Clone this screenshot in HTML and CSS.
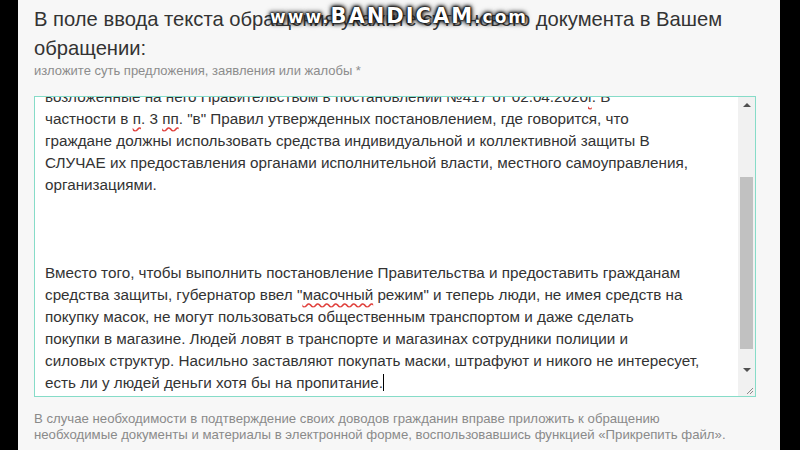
FILE: index.html
```html
<!DOCTYPE html>
<html lang="ru">
<head>
<meta charset="utf-8">
<title>Обращение</title>
<link rel="stylesheet" href="styles.css">
</head>
<body>
<div class="screen">
  <div class="bar"></div>
  <main class="page">
    <h1 class="title">В поле ввода текста обращения укажите суть нового документа в Вашем<br>обращении:</h1>
    <div class="label">изложите суть предложения, заявления или жалобы *</div>
    <div class="field">
      <div class="text">
        <div class="lines">
          <div class="ln">возложенные на него Правительством в постановлении №417 от 02.04.2020<span class="sp">г</span>. В</div>
          <div class="ln">частности в <span class="sp">п</span>. 3 <span class="sp">пп</span>. "в" Правил утвержденных постановлением, где говорится, что</div>
          <div class="ln">граждане должны использовать средства индивидуальной и коллективной защиты В</div>
          <div class="ln">СЛУЧАЕ их предоставления органами исполнительной власти, местного самоуправления,</div>
          <div class="ln">организациями.</div>
          <div class="ln">&nbsp;</div>
          <div class="ln">&nbsp;</div>
          <div class="ln">&nbsp;</div>
          <div class="ln">Вместо того, чтобы выполнить постановление Правительства и предоставить гражданам</div>
          <div class="ln">средства защиты, губернатор ввел "<span class="sp">масочный</span> режим" и теперь люди, не имея средств на</div>
          <div class="ln">покупку масок, не могут пользоваться общественным транспортом и даже сделать</div>
          <div class="ln">покупки в магазине. Людей ловят в транспорте и магазинах сотрудники полиции и</div>
          <div class="ln">силовых структур. Насильно заставляют покупать маски, штрафуют и никого не интересует,</div>
          <div class="ln">есть ли у людей деньги хотя бы на пропитание.<span class="caret"></span></div>
        </div>
      </div>
      <div class="scroll">
        <div class="arrow up"></div>
        <div class="track"><div class="thumb"></div></div>
        <div class="arrow down"></div>
        <div class="corner">
          <svg width="17" height="17" viewBox="0 0 17 17"><path d="M15 9 L9 15 M15 12 L12 15" stroke="#8a8a8a" stroke-width="1"/></svg>
        </div>
      </div>
    </div>
    <div class="note">В случае необходимости в подтверждение своих доводов гражданин вправе приложить к обращению<br>необходимые документы и материалы в электронной форме, воспользовавшись функцией «Прикрепить файл».</div>
    <div class="watermark"><span class="wm-s">www.</span><span class="wm-b">BANDICAM</span><span class="wm-s">.com</span></div>
  </main>
  <div class="bar bar-r"></div>
</div>
</body>
</html>
```
FILE: styles.css
```css
html, body {
  margin: 0;
  padding: 0;
  background: #000;
}
.screen {
  display: flex;
  width: 800px;
  height: 450px;
  overflow: hidden;
}
.bar {
  width: 18px;
  flex: none;
  background: #000;
}
.bar-r {
  width: 20px;
}
.page {
  position: relative;
  flex: 1;
  background: #f7f7f7;
  padding: 5px 0 0 16px;
  font-family: "Liberation Sans", Arial, sans-serif;
  color: #333;
  overflow: hidden;
}
.title {
  margin: 0;
  font-size: 20.2px;
  font-weight: normal;
  line-height: 29px;
  color: #333;
  white-space: nowrap;
}
.label {
  font-size: 13px;
  line-height: 16px;
  color: #8c8c8c;
}
.field {
  margin-top: 17px;
  width: 720px;
  height: 299px;
  border: 1px solid #86dcc8;
  background: #fff;
  display: flex;
}
.text {
  flex: 1;
  overflow: hidden;
  padding-left: 10px;
}
.lines {
  margin-top: -11px;
  font-size: 15.25px;
  line-height: 22px;
  color: #333;
}
.ln {
  white-space: nowrap;
}
.sp {
  text-decoration: underline wavy #e0403c;
  text-decoration-skip-ink: none;
  text-underline-offset: 2px;
}
.caret {
  display: inline-block;
  width: 1px;
  height: 17px;
  background: #000;
  vertical-align: -3px;
}
.scroll {
  width: 17px;
  flex: none;
  display: flex;
  flex-direction: column;
  background: #f1f1f1;
}
.arrow {
  height: 17px;
  flex: none;
  position: relative;
}
.arrow::after {
  content: "";
  position: absolute;
  left: 5px;
  top: 6px;
  border-left: 4px solid transparent;
  border-right: 4px solid transparent;
}
.up::after {
  border-bottom: 4px solid #505050;
}
.down::after {
  border-top: 4px solid #505050;
}
.track {
  flex: 1;
  padding: 63px 2px 13px 2px;
  display: flex;
}
.thumb {
  flex: 1;
  background: #c1c1c1;
}
.corner {
  height: 17px;
  flex: none;
  background: #f1f1f1;
}
.corner svg {
  display: block;
}
.note {
  margin-top: 14px;
  font-size: 13.2px;
  line-height: 16px;
  color: #8a8a8a;
  white-space: nowrap;
}
.watermark {
  position: absolute;
  left: 252px;
  top: 4px;
  font-family: "DejaVu Sans", sans-serif;
  font-weight: bold;
  color: #fff;
  white-space: nowrap;
  text-shadow: 0 0 1px #000, 0 0 2px #000, 0 0 3px #111, 0 0 4px #222, 0 0 5px #333, 0 0 6px #444;
}
.wm-s {
  font-size: 17px;
  letter-spacing: 2px;
}
.wm-b {
  font-size: 21px;
  letter-spacing: 2px;
}
```
